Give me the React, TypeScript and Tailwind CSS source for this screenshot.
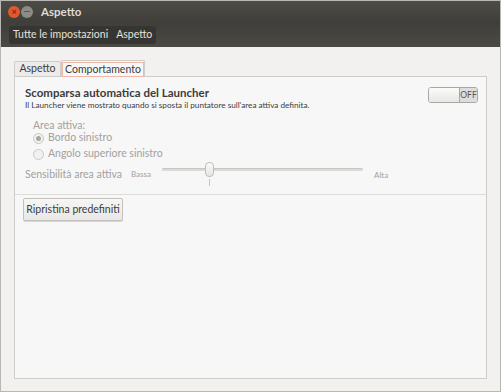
import React from 'react';

const font = { fontFamily: 'Lato, "Open Sans", "DejaVu Sans", sans-serif' };

const Radio: React.FC<{ checked?: boolean; label: string }> = ({ checked, label }) => (
    <div className="flex items-center gap-[4px] h-[16px]">
        <span className="shrink-0 w-[11px] h-[11px] rounded-full border border-[#c9c7c4] bg-[#f2f1f0] flex items-center justify-center">
            {checked && <span className="w-[5px] h-[5px] rounded-full bg-[#a8a6a3]" />}
        </span>
        <span className="text-[10.5px] text-[#a3a19e] whitespace-nowrap">{label}</span>
    </div>
);

export default function App() {
    return (
        <div className="w-[501px] h-[392px] flex flex-col bg-[#f2f1f0] border border-[#b9b7b3] overflow-hidden" style={font}>
            {/* title bar */}
            <div className="h-[21px] shrink-0 flex items-center bg-gradient-to-b from-[#4d4c47] to-[#3f3e3a] px-[7px]">
                <span className="w-[12px] h-[12px] rounded-full bg-[#e2582f] flex items-center justify-center text-[9px] leading-none text-[#7a2a14] font-bold">×</span>
                <span className="w-[12px] h-[12px] rounded-full bg-[#8d8b86] ml-[1px] flex items-center justify-center">
                    <span className="w-[6px] h-[1px] bg-[#5a5955]" />
                </span>
                <span className="ml-[8px] text-[11.5px] font-bold text-[#dfdbd2]">Aspetto</span>
            </div>
            {/* toolbar */}
            <div className="h-[25px] shrink-0 flex items-center bg-gradient-to-b from-[#3f3e3a] to-[#4a4944] pl-[8px]">
                <div className="flex items-center h-[18px] rounded-[3px] bg-[#363531] px-[4px] gap-[8px] text-[10.5px] text-[#e6e2da] whitespace-nowrap">
                    <span>Tutte le impostazioni</span>
                    <span>Aspetto</span>
                </div>
            </div>
            {/* body */}
            <div className="flex-1 flex flex-col pt-[12px] pl-[13px] pr-[13px] pb-[12px]">
                <div className="flex items-end h-[17px] shrink-0">
                    <div className="shrink-0 h-[15px] w-[47px] border border-b-0 border-[#cfcdca] bg-[#ecebe9] flex items-center justify-center text-[10.5px] text-[#3c3c3c] rounded-t-[2px]">Aspetto</div>
                    <div className="shrink-0 h-[17px] w-[84px] border border-b-0 border-[#cfcdca] bg-[#f7f7f7] flex items-center justify-center rounded-t-[2px] relative top-[1px]">
                        <span className="px-[2px] border border-[#f0b8a8] text-[10.5px] text-[#3c3c3c] leading-[13px] whitespace-nowrap">Comportamento</span>
                    </div>
                </div>
                <div className="flex-1 border border-[#cfcdca] bg-[#f7f7f7] flex flex-col">
                    <div className="flex justify-between pt-[9px] pl-[10px] pr-[8px]">
                        <div className="flex flex-col whitespace-nowrap">
                            <span className="text-[11.5px] font-bold text-[#3c3c3c] leading-[14px]">Scomparsa automatica del Launcher</span>
                            <span className="text-[8.2px] text-[#3c3c3c] leading-[11px]">Il Launcher viene mostrato quando si sposta il puntatore sull'area attiva definita.</span>
                        </div>
                        <div className="shrink-0 mt-[1px] w-[50px] h-[16px] flex border border-[#a9a7a3] rounded-[3px] overflow-hidden">
                            <div className="w-[31px] bg-gradient-to-b from-[#fbfbfa] to-[#e8e7e5] border-r border-[#a9a7a3]" />
                            <div className="flex-1 bg-[#dedddb] text-[8.5px] text-[#555] flex items-center justify-center">OFF</div>
                        </div>
                    </div>
                    <div className="pl-[18px] mt-[8px] flex flex-col">
                        <span className="text-[10.5px] text-[#a3a19e] leading-[12px]">Area attiva:</span>
                        <div className="mt-[-1px]">
                            <Radio checked label="Bordo sinistro" />
                            <Radio label="Angolo superiore sinistro" />
                        </div>
                    </div>
                    <div className="flex items-start pl-[10px] h-[26px]">
                        <span className="shrink-0 whitespace-nowrap text-[10.5px] text-[#a3a19e] leading-[14px] mt-[5px] w-[106px]">Sensibilità area attiva</span>
                        <span className="shrink-0 text-[8px] text-[#a3a19e] leading-[12px] mt-[6px] w-[31px]">Bassa</span>
                        <div className="shrink-0 relative w-[201px] h-[26px]">
                            <div className="absolute left-0 right-0 top-[6px] h-[3px] rounded-full bg-[#dcdad7] border-t border-[#c8c6c3]" />
                            <div className="absolute left-[43px] top-[0px] w-[9px] h-[15px] rounded-[4px] border border-[#c0bebb] bg-gradient-to-b from-[#fbfbfa] to-[#e6e5e3]" />
                            <div className="absolute left-[47px] top-[17px] w-[1px] h-[7px] bg-[#c8c6c3]" />
                        </div>
                        <span className="shrink-0 text-[8px] text-[#a3a19e] leading-[12px] mt-[7px] ml-[11px]">Alta</span>
                    </div>
                    <div className="h-[1px] bg-[#dedcd9] mt-[6px]" />
                    <div className="pl-[8px] pt-[3px]">
                        <div className="w-[100px] h-[23px] border border-[#c3c1be] rounded-[2px] bg-gradient-to-b from-[#f6f6f5] to-[#e9e8e6] flex items-center justify-center text-[10.5px] text-[#3c3c3c] whitespace-nowrap shadow-[0_1px_0_#d8d6d3]">Ripristina predefiniti</div>
                    </div>
                </div>
            </div>
        </div>
    );
}
